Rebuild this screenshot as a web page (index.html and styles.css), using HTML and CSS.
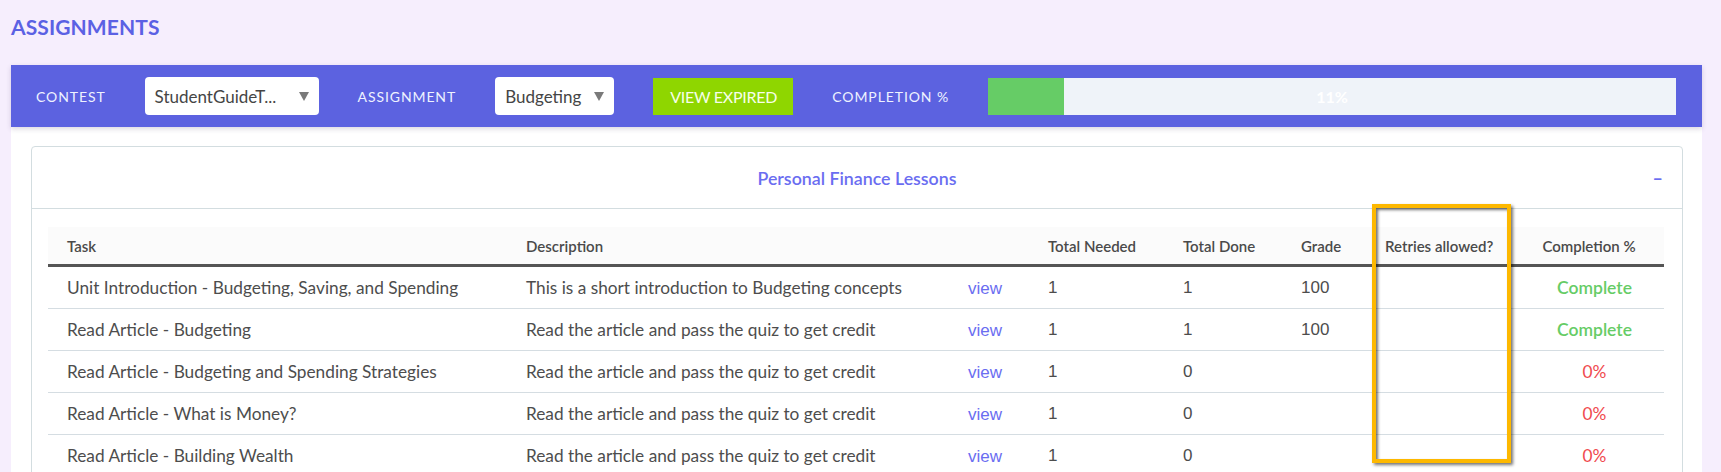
FILE: index.html
```html
<!DOCTYPE html>
<html lang="en">
<head>
<meta charset="utf-8">
<title>Assignments</title>
<link rel="stylesheet" href="styles.css">
</head>
<body>
<div class="page">
  <h1 class="page-title">ASSIGNMENTS</h1>
  <div class="panel">
    <div class="filter-bar">
      <span class="filter-label">CONTEST</span>
      <div class="select select-contest">
        <span class="select-value">StudentGuideT...</span>
        <svg class="select-arrow" width="10" height="9" viewBox="0 0 10 9"><polygon points="0,0 10,0 5,9" fill="#7a7a7a"/></svg>
      </div>
      <span class="filter-label">ASSIGNMENT</span>
      <div class="select select-assignment">
        <span class="select-value">Budgeting</span>
        <svg class="select-arrow" width="10" height="9" viewBox="0 0 10 9"><polygon points="0,0 10,0 5,9" fill="#7a7a7a"/></svg>
      </div>
      <button class="btn-expired" type="button">VIEW EXPIRED</button>
      <span class="filter-label">COMPLETION %</span>
      <div class="progress">
        <div class="progress-fill" style="width:11%"></div>
        <span class="progress-text">11%</span>
      </div>
    </div>
    <div class="panel-body">
      <div class="card">
        <div class="card-header">
          <span></span>
          <span class="card-title">Personal Finance Lessons</span>
          <span class="collapse">–</span>
        </div>
        <div class="card-body">
          <table class="tasks">
            <colgroup>
              <col class="c-task"><col class="c-desc"><col class="c-view"><col class="c-needed"><col class="c-done"><col class="c-grade"><col class="c-retries"><col class="c-comp">
            </colgroup>
            <thead>
              <tr>
                <th>Task</th>
                <th>Description</th>
                <th></th>
                <th>Total Needed</th>
                <th>Total Done</th>
                <th>Grade</th>
                <th>Retries allowed?</th>
                <th class="center">Completion %</th>
              </tr>
            </thead>
            <tbody>
              <tr>
                <td>Unit Introduction - Budgeting, Saving, and Spending</td>
                <td>This is a short introduction to Budgeting concepts</td>
                <td><a class="view-link">view</a></td>
                <td class="num">1</td>
                <td class="num">1</td>
                <td class="num">100</td>
                <td></td>
                <td class="center status-ok">Complete</td>
              </tr>
              <tr>
                <td>Read Article - Budgeting</td>
                <td>Read the article and pass the quiz to get credit</td>
                <td><a class="view-link">view</a></td>
                <td class="num">1</td>
                <td class="num">1</td>
                <td class="num">100</td>
                <td></td>
                <td class="center status-ok">Complete</td>
              </tr>
              <tr>
                <td>Read Article - Budgeting and Spending Strategies</td>
                <td>Read the article and pass the quiz to get credit</td>
                <td><a class="view-link">view</a></td>
                <td class="num">1</td>
                <td class="num">0</td>
                <td class="num"></td>
                <td></td>
                <td class="center status-zero">0%</td>
              </tr>
              <tr>
                <td>Read Article - What is Money?</td>
                <td>Read the article and pass the quiz to get credit</td>
                <td><a class="view-link">view</a></td>
                <td class="num">1</td>
                <td class="num">0</td>
                <td class="num"></td>
                <td></td>
                <td class="center status-zero">0%</td>
              </tr>
              <tr>
                <td>Read Article - Building Wealth</td>
                <td>Read the article and pass the quiz to get credit</td>
                <td><a class="view-link">view</a></td>
                <td class="num">1</td>
                <td class="num">0</td>
                <td class="num"></td>
                <td></td>
                <td class="center status-zero">0%</td>
              </tr>
            </tbody>
          </table>
        </div>
      </div>
    </div>
  </div>
  <div class="highlight"></div>
</div>
</body>
</html>
```

FILE: styles.css
```css
html, body {
  margin: 0;
  padding: 0;
}

body {
  background: #f6eefd;
  font-family: Lato, "Open Sans", "Liberation Sans", sans-serif;
  color: #4d4d4d;
  overflow: hidden;
}

.page {
  position: relative;
  padding: 0 19px 0 11px;
}

.page-title {
  margin: 0;
  padding-top: 14px;
  height: 25px;
  margin-bottom: 26px;
  font-size: 21px;
  line-height: 25px;
  font-weight: 700;
  color: #5b61e4;
  letter-spacing: 0.1px;
}

.panel {
  background: #ffffff;
  min-height: 420px;
}

.filter-bar {
  position: relative;
  z-index: 1;
  height: 62px;
  box-sizing: border-box;
  background: #5c62e0;
  display: flex;
  align-items: center;
  gap: 39px;
  padding: 0 26px 0 25px;
  box-shadow: 0 2px 5px rgba(60, 40, 90, 0.18);
}

.filter-label {
  font-size: 14px;
  letter-spacing: 0.9px;
  color: #eef2ff;
  white-space: nowrap;
}

.select {
  height: 38px;
  box-sizing: border-box;
  background: #ffffff;
  border-radius: 4px;
  display: flex;
  align-items: center;
  justify-content: space-between;
  padding: 0 10px 0 10px;
  font-size: 17px;
  color: #454545;
}

.select-contest {
  width: 174px;
}

.select-assignment {
  width: 119px;
  padding-left: 10px;
}

.select-arrow {
  display: block;
  flex: none;
}

.btn-expired {
  height: 37px;
  border: 0;
  margin: 0;
  padding: 0 16px 0 17px;
  background: #8fd600;
  color: #f6ffe8;
  font-family: Lato, "Liberation Sans", sans-serif;
  font-size: 16px;
  letter-spacing: -0.25px;
  white-space: nowrap;
}

.progress {
  flex: 1;
  height: 37px;
  background: #eff3f9;
  display: grid;
  align-items: center;
}

.progress-fill,
.progress-text {
  grid-area: 1 / 1;
}

.progress-fill {
  height: 100%;
  background: #66cc66;
  justify-self: start;
}

.progress-text {
  justify-self: center;
  color: #ffffff;
  font-weight: 700;
  font-size: 16px;
}

.panel-body {
  padding: 19px 19px 0 20px;
}

.card {
  border: 1px solid #d3dde0;
  border-radius: 4px;
  background: #fff;
}

.card-header {
  height: 61px;
  border-bottom: 1px solid #d3dde0;
  display: grid;
  grid-template-columns: 1fr auto 1fr;
  align-items: center;
  padding: 0 19px;
}

.card-title {
  font-size: 17.8px;
  font-weight: 600;
  color: #6a6df1;
}

.collapse {
  justify-self: end;
  font-size: 18px;
  font-weight: 700;
  color: #6a6df1;
}

.card-body {
  padding: 18px 18px 0 16px;
}

.tasks {
  width: 100%;
  border-collapse: collapse;
  table-layout: fixed;
}

.c-task { width: 459px; }
.c-desc { width: 442px; }
.c-view { width: 80px; }
.c-needed { width: 135px; }
.c-done { width: 118px; }
.c-grade { width: 84px; }
.c-retries { width: 148px; }
.c-comp { width: 150px; }

.tasks th {
  height: 37px;
  background: #fbfbfb;
  border-bottom: 3px solid #555555;
  text-align: left;
  padding: 0 0 0 19px;
  font-size: 15px;
  font-weight: 600;
  color: #4a4a4a;
  white-space: nowrap;
}

.tasks td {
  height: 41px;
  border-bottom: 1px solid #d5dde2;
  padding: 0 0 0 19px;
  font-size: 17.25px;
  color: #4d4d4d;
  white-space: nowrap;
}

.tasks th.center {
  text-align: center;
  padding: 0;
}

.tasks td.center {
  text-align: center;
  padding: 0 0 0 11px;
}

.tasks td.num {
  font-family: "Liberation Sans", Arial, sans-serif;
  font-size: 17px;
}

.view-link {
  font-family: "Liberation Sans", Arial, sans-serif;
  color: #6a6df1;
  font-size: 17px;
  text-decoration: none;
}

.tasks td.status-ok {
  color: #66cc66;
  font-weight: 600;
  font-size: 17.5px;
}

.tasks td.status-zero {
  color: #f04a4e;
}

.highlight {
  position: absolute;
  left: 1372px;
  top: 204px;
  width: 139px;
  height: 259px;
  box-sizing: border-box;
  border: 4px solid #fdb800;
  box-shadow: 2px 2px 3px rgba(0, 0, 0, 0.55), inset 2px 2px 3px rgba(0, 0, 0, 0.55);
  pointer-events: none;
}
```
